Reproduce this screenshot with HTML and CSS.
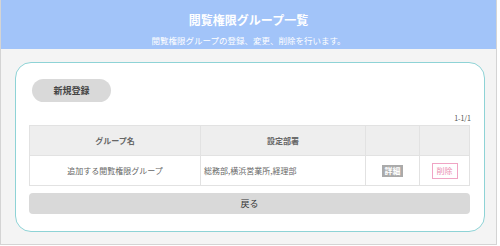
FILE: index.html
```html
<!DOCTYPE html>
<html lang="ja">
<head>
<meta charset="utf-8">
<title>閲覧権限グループ一覧</title>
<link rel="stylesheet" href="styles.css">
</head>
<body>
<div class="Frame">
	<div class="Head">
		<div class="headTitle">閲覧権限グループ一覧</div>
		<div class="headSub">閲覧権限グループの登録、変更、削除を行います。</div>
	</div>
	<div class="Body">
		<div class="Card">
			<button class="btNew">新規登録</button>
			<div class="pager">1-1/1</div>
			<table class="ListTable">
				<tr>
					<th class="colName">グループ名</th>
					<th class="colDept">設定部署</th>
					<th class="colBt"></th>
					<th class="colBt2"></th>
				</tr>
				<tr>
					<td class="tdCenter">追加する閲覧権限グループ</td>
					<td class="tdLeft">総務部,横浜営業所,経理部</td>
					<td class="tdCenter"><span class="btDetail">詳細</span></td>
					<td class="tdCenter"><span class="btDelete">削除</span></td>
				</tr>
			</table>
			<button class="btBack">戻る</button>
		</div>
	</div>
</div>
</body>
</html>
```

FILE: styles.css
```css
body{
	margin:0;
	background:#ffffff;
	font-family:"Noto Sans CJK JP", "Noto Sans", sans-serif;
}
.Frame{
	width:495px;
	border:1px #d4d4d4 solid;
	border-top:none;
}
.Head{
	background:#a2c4f9;
	height:49px;
	box-sizing:border-box;
	padding-top:12px;
	text-align:center;
	color:#ffffff;
}
.headTitle{
	font-size:12px;
	line-height:16px;
	font-weight:bold;
}
.headSub{
	font-size:8.5px;
	line-height:12px;
	margin-top:6px;
}
.Body{
	background:#f4f4f4;
	padding:13px 11px 12px 14px;
}
.Card{
	background:#ffffff;
	border:1px #8ed3d6 solid;
	border-radius:16px;
	padding:16px 13px 16px 13px;
	height:136px;
}
.btNew{
	display:block;
	width:79px;
	height:23px;
	margin-left:3px;
	border:none;
	border-radius:12px;
	background:#d9d9d9;
	color:#444444;
	font-family:inherit;
	font-size:9px;
	font-weight:bold;
	padding:0;
}
.pager{
	margin-top:11px;
	height:10px;
	line-height:10px;
	font-size:7px;
	color:#555555;
	text-align:right;
}
.ListTable{
	margin-top:2px;
	width:441px;
	border-collapse:collapse;
	table-layout:fixed;
	font-size:8px;
	color:#666666;
}
.ListTable th,
.ListTable td{
	border:1px #e2e2e2 solid;
	padding:0;
}
.ListTable th{
	background:#eeeeee;
	height:29px;
	font-weight:bold;
}
.ListTable td{
	height:29px;
}
.colName{ width:170px; }
.colDept{ width:164px; }
.colBt{ width:53px; }
.tdCenter{ text-align:center; }
.tdLeft{ text-align:left; padding-left:3px !important; }
.btDetail{
	display:inline-block;
	width:21px;
	height:12px;
	line-height:12px;
	background:#aaaaaa;
	color:#ffffff;
	font-weight:bold;
	font-size:8px;
}
.btDelete{
	display:inline-block;
	width:24px;
	height:14px;
	line-height:14px;
	border:1px #f0a4c4 solid;
	color:#ea8fb3;
	font-size:8px;
}
.btBack{
	display:block;
	margin-top:7px;
	width:441px;
	height:21px;
	border:none;
	border-radius:4px;
	background:#d9d9d9;
	color:#333333;
	font-family:inherit;
	font-size:9px;
	padding:0;
}
```
